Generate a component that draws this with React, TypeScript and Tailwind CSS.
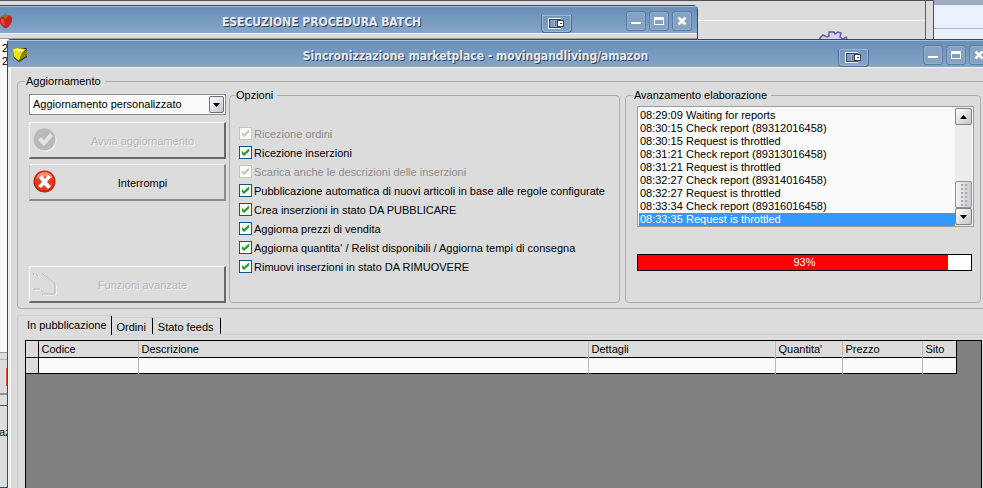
import React, { useState } from 'react';
import clsx from 'clsx';

const OPTIONS = [
  { id: 'orders', label: 'Ricezione ordini', disabled: true },
  { id: 'listings', label: 'Ricezione inserzioni', disabled: false },
  { id: 'descriptions', label: 'Scarica anche le descrizioni delle inserzioni', disabled: true },
  { id: 'autopublish', label: 'Pubblicazione automatica di nuovi articoli in base alle regole configurate', disabled: false },
  { id: 'create', label: 'Crea inserzioni in stato DA PUBBLICARE', disabled: false },
  { id: 'prices', label: 'Aggiorna prezzi di vendita', disabled: false },
  { id: 'quantity', label: "Aggiorna quantita' / Relist disponibili / Aggiorna tempi di consegna", disabled: false },
  { id: 'remove', label: 'Rimuovi inserzioni in stato DA RIMUOVERE', disabled: false },
];

const LOG = [
  { time: '08:29:09', text: 'Waiting for reports' },
  { time: '08:30:15', text: 'Check report (89312016458)' },
  { time: '08:30:15', text: 'Request is throttled' },
  { time: '08:31:21', text: 'Check report (89313016458)' },
  { time: '08:31:21', text: 'Request is throttled' },
  { time: '08:32:27', text: 'Check report (89314016458)' },
  { time: '08:32:27', text: 'Request is throttled' },
  { time: '08:33:34', text: 'Check report (89316016458)' },
  { time: '08:33:35', text: 'Request is throttled' },
];

const COLUMNS = [
  { label: 'Codice', width: 'w-[100px]' },
  { label: 'Descrizione', width: 'w-[450px]' },
  { label: 'Dettagli', width: 'w-[187px]' },
  { label: "Quantita'", width: 'w-[67px]' },
  { label: 'Prezzo', width: 'w-[80px]' },
  { label: 'Sito', width: 'w-[34px]' },
];

const TABS = ['In pubblicazione', 'Ordini', 'Stato feeds'];

const StrawberryIcon = () => (
  <svg width="17" height="17" viewBox="0 0 17 17" aria-hidden="true">
    <path d="M0 5 Q2 2 6 3 Q11 1 12 5 Q13 10 7 15 Q5 16 3 14 Q-2 9 0 5Z" fill="#c8241c" />
    <path d="M1 6 Q3 5 4 7 L5 13 Q0 10 1 6Z" fill="#e04a3c" />
    <path d="M1 3 L4 2 L5 0 L7 2 L10 2 L7 4 L5 6 L4 4Z" fill="#8a7a2c" />
  </svg>
);

const CubeIcon = () => (
  <svg width="16" height="16" viewBox="0 0 16 16" aria-hidden="true">
    <path d="M1 2 L5 1 H14 L15 3 V10 L7 15 L2 11Z" fill="#1c1c00" />
    <path d="M1 2 L5 1 L14 2 L10 6 L2 5Z" fill="#ffff20" />
    <path d="M1 3 L10 6 L7 14 L2 10Z" fill="#e8e800" />
    <path d="M10 6 L15 3 V9 L7 14Z" fill="#858500" />
    <path d="M6 3 H9 V4 H6Z" fill="#fff" />
  </svg>
);

const DockIcon = () => (
  <svg width="17" height="11" viewBox="0 0 17 11" aria-hidden="true" shapeRendering="crispEdges">
    <path d="M0 0h13v11H0z" fill="#f4f6f8" />
    <path d="M1 1h12v9H1z" fill="#3d4656" />
    <path d="M2 2h10v7H2z" fill="#7d9cc2" />
    <path d="M6 2h1v7H6z" fill="#a8b8cc" />
    <path d="M7 3h1v5H7z" fill="#4f6580" />
    <path d="M9 2h7v7H9z" fill="#3d4656" />
    <path d="M10 3h5v5h-5z" fill="#fff" />
    <path d="M12 5h2v1h-2z" fill="#3d4656" />
  </svg>
);

const GearIcon = () => (
  <svg width="32" height="32" viewBox="0 0 32 32" aria-hidden="true">
    <path
      d="M3 7 L6 4 L10 6 L12 5 L12 1 L17 1 L18 3 L21 1 L24 2 L23 6 L26 8 L29 6 L31 10 L28 15 L31 18 L27 25 L16 30 L5 24 L1 16Z"
      fill="#d5d3f0"
      stroke="#605f9c"
      strokeWidth="1.5"
    />
  </svg>
);

const CheckCircle = () => (
  <svg width="24" height="24" viewBox="0 0 24 24" aria-hidden="true">
    <circle cx="12.5" cy="12.5" r="11" fill="#f4f4f4" />
    <circle cx="11.5" cy="11.5" r="11" fill="#b9b9b9" />
    <path d="M5 12 L8 9 L11 12 L17 5 L20 8 L11 18Z" fill="#e4e4e4" />
  </svg>
);

const StopCircle = () => (
  <svg width="24" height="24" viewBox="0 0 24 24" aria-hidden="true">
    <circle cx="11.5" cy="11.5" r="11" fill="#c5240c" />
    <circle cx="11.5" cy="11" r="9.5" fill="#ee3818" />
    <path d="M3 9 Q5 2 11.5 2 Q18 2 20 9 Q12 4 3 9Z" fill="#ff8e70" />
    <path d="M6 8 L9 5 L12 9 L15 5 L18 7 L14 12 L18 16 L15 19 L11 15 L8 18 L5 16 L9 12Z" fill="#fff" />
  </svg>
);

const FoldersIcon = () => (
  <svg width="24" height="24" viewBox="0 0 24 24" fill="none" aria-hidden="true">
    <path d="M0.500 1V3M3 2L5 4M9 1L12 4M0.500 17H7M8 18L10 20M13 4L22 12V22H9" stroke="#fff" transform="translate(1 1)" />
    <path d="M0.500 1V3M3 2L5 4M9 1L12 4M0.500 17H7M8 18L10 20M13 4L22 12V22H9" stroke="#b4b4b4" />
  </svg>
);

const CAPTION_BUTTON =
  'flex size-5 items-center justify-center rounded-[3px] border border-[#5b7ea6] bg-[#85a2c3] shadow-[inset_0_0_0_1px_#92adcb]';

interface TitleBarProps {
  icon: React.ReactNode;
  title: string;
}

const TitleBar: React.FC<TitleBarProps> = ({ icon, title }) => (
  <header className="relative flex h-7 shrink-0 items-center gap-[3px] border-t border-b border-t-[#a9c0d9] border-b-[#f4f4f4] bg-linear-to-b from-[#688fb8] to-[#86a5c7] pt-0.5 pr-[5px] pl-1">
    {icon}
    <h1 className="flex-1 pt-0.5 text-center font-['DejaVu_Sans_Condensed','DejaVu_Sans',sans-serif] text-[12px] leading-4 font-bold whitespace-nowrap text-[#e6ebf2] [text-shadow:1px_1px_0_#34445a]">
      {title}
    </h1>
    <button aria-label="Sgancia" className="absolute right-[125px] bottom-0 flex h-[18px] w-[31px] items-center justify-center rounded-b-[4px] border border-t-0 border-[#4f6d90] shadow-[inset_0_0_0_1px_#9db6d0]">
      <DockIcon />
    </button>
    <button aria-label="Riduci" className={CAPTION_BUTTON}>
      <svg width="10" height="10" viewBox="0 0 10 10"><path d="M0 6h10v2H0z" fill="#fff" /></svg>
    </button>
    <button aria-label="Ingrandisci" className={CAPTION_BUTTON}>
      <svg width="10" height="10" viewBox="0 0 10 10"><path d="M0 1h10v8H0zM1 4v4h8V4z" fill="#fff" fillRule="evenodd" /></svg>
    </button>
    <button aria-label="Chiudi" className={CAPTION_BUTTON}>
      <svg width="10" height="10" viewBox="0 0 10 10"><path d="M1.500 1.500 L8.500 8.500 M8.500 1.500 L1.500 8.500" stroke="#fff" strokeWidth="2.6" /></svg>
    </button>
  </header>
);

interface ActionButtonProps {
  icon: React.ReactNode;
  label: string;
  disabled?: boolean;
}

const ActionButton: React.FC<ActionButtonProps> = ({ icon, label, disabled }) => (
  <button
    disabled={disabled}
    className={clsx(
      'flex h-[37px] shrink-0 items-center border-t border-r-2 border-b-2 border-l pl-[3px]',
      disabled
        ? 'border-t-white border-r-[#696969] border-b-[#696969] border-l-white text-[#b8b8b8] [text-shadow:1px_1px_0_#f2f2f2]'
        : 'border-t-[#f0f0f0] border-r-[#8a8a8a] border-b-[#8a8a8a] border-l-[#c8c8d0] text-black'
    )}
  >
    {icon}
    <span className="flex-1 pt-0.5 pl-1">{label}</span>
  </button>
);

interface GroupBoxProps {
  title: string;
  className?: string;
  children: React.ReactNode;
}

const GroupBox: React.FC<GroupBoxProps> = ({ title, className, children }) => (
  <fieldset className={clsx('min-w-0 rounded-[4px] border border-[#acacac]', className)}>
    <legend className="-ml-1 pr-1 pl-px leading-3">{title}</legend>
    {children}
  </fieldset>
);

const ARROW_BUTTON =
  'flex h-[17px] w-[17px] items-center justify-center rounded-[2px] border border-[#808088] bg-linear-to-br from-white to-[#c4c4ca]';

const App: React.FC = () => {
  const [activeTab, setActiveTab] = useState(TABS[0]);
  const [checked, setChecked] = useState<string[]>(OPTIONS.map((o) => o.id));
  const progress = 93;

  const toggle = (id: string) =>
    setChecked(checked.includes(id) ? checked.filter((c) => c !== id) : [...checked, id]);

  return (
    <div className="relative h-screen overflow-hidden bg-[#e9f1fc] font-['Liberation_Sans',sans-serif] text-[11px] leading-[13px] text-black">
      {/* Desktop strip behind the windows */}
      <div className="h-[5px] bg-[#9dabbf]"></div>
      <div className="h-6 border-b border-[#a9b8cb]"></div>

      {/* Parent application window */}
      <div className="absolute inset-y-0 right-[49px] left-0 border-t border-r border-[#50505a] bg-[#dcdcdc] pr-[7px]">
        <div className="h-full border-r border-[#60606a]">
          <div className="h-5 border-b border-white"></div>
        </div>
        <div className="absolute top-[30px] right-[84px]">
          <GearIcon />
        </div>
      </div>

      {/* Batch window */}
      <section className="absolute top-[5px] bottom-0 -left-[5px] flex w-[703px] flex-col rounded-t-[4px] border border-[#39485c] bg-[#dcdcdc]">
        <TitleBar icon={<StrawberryIcon />} title="ESECUZIONE PROCEDURA BATCH" />
        <div className="mt-1 flex h-[315px] flex-col border-t border-b border-[#a0a0a0] bg-[#fafafa] pt-[3px] pl-1.5">
          <span>2</span>
          <span>2</span>
        </div>
        <div className="mt-1.5 h-9 border-t border-b-2 border-[#b0b0b8] border-b-[#909090] pt-2 pl-2.5">
          <div className="h-[18px] w-5 bg-[#e2532f]"></div>
        </div>
        <div className="mt-2.5 border-t border-[#50505a] pt-5 pl-[3px]">az</div>
      </section>

      {/* Marketplace sync window */}
      <section className="absolute top-[39px] -right-3 bottom-0 left-[7px] flex flex-col rounded-tl-[4px] border border-b-0 border-[#39485c] bg-[#dcdcdc]">
        <TitleBar icon={<CubeIcon />} title="Sincronizzazione marketplace - movingandliving/amazon" />

        <main className="flex min-h-0 flex-1 flex-col border-l-3 border-[#f0f0f0] pt-[7px] pr-[5px] pl-1.5">
          <GroupBox title="Aggiornamento" className="pr-[7px] pb-[5px] pl-[11px]">
            <div className="flex pt-0.5">
              <div className="mr-[3px] flex w-[197px] shrink-0 flex-col pt-[5px]">
                <div className="relative mb-[7px] flex">
                  <select
                    aria-label="Tipo di aggiornamento"
                    className="h-[21px] w-full appearance-none border border-[#8c8c8c] bg-[#fafafa] pr-5 pl-[3px]"
                  >
                    <option>Aggiornamento personalizzato</option>
                  </select>
                  <span className="pointer-events-none absolute top-0.5 right-0.5 flex h-[17px] w-[15px] items-center justify-center rounded-[2px] border border-[#70707c] bg-linear-to-br from-white to-[#c4c4ca]">
                    <svg width="7" height="4" viewBox="0 0 7 4"><path d="M0 0h7L3.500 4z" /></svg>
                  </span>
                </div>
                <ActionButton icon={<CheckCircle />} label="Avvia aggiornamento" disabled />
                <div className="mt-[5px] flex flex-1 flex-col justify-between">
                  <ActionButton icon={<StopCircle />} label="Interrompi" />
                  <ActionButton icon={<FoldersIcon />} label="Funzioni avanzate" disabled />
                </div>
              </div>

              <div className="grid flex-1 grid-cols-[392fr_357fr] gap-[5px]">
                <GroupBox title="Opzioni" className="h-[214px] pt-[23px] pl-[9px]">
                  {OPTIONS.map((option) => (
                    <label
                      key={option.id}
                      className={clsx(
                        'flex h-[19px] items-center gap-0.5 whitespace-nowrap',
                        option.disabled && 'text-[#8c8c8c]'
                      )}
                    >
                      <span className="relative flex">
                        <input
                          type="checkbox"
                          checked={checked.includes(option.id)}
                          disabled={option.disabled}
                          onChange={() => toggle(option.id)}
                          className="peer size-[13px] appearance-none border border-[#1c5180] bg-[#fafafa] disabled:border-[#c6c6ba]"
                        />
                        <svg
                          width="13"
                          height="13"
                          viewBox="0 0 13 13"
                          className={clsx(
                            'pointer-events-none invisible absolute inset-0 peer-checked:visible',
                            option.disabled ? 'fill-[#c6c6ba]' : 'fill-[#21a121]'
                          )}
                        >
                          <path d="M3 5 L5 7 L10 2.500 V5.500 L5 10 L3 8Z" />
                        </svg>
                      </span>
                      <span className="pt-px">{option.label}</span>
                    </label>
                  ))}
                </GroupBox>

                <GroupBox title="Avanzamento elaborazione" className="h-[214px] pt-[5px] pr-1.5 pl-[11px]">
                  <div className="flex h-[121px] border border-[#9c9c9c] bg-[#fafafa] pr-px">
                    <ul role="listbox" aria-label="Log" className="flex-1 pt-0.5 pl-px">
                      {LOG.map((entry, idx) => (
                        <li
                          key={idx}
                          role="option"
                          aria-selected={idx === LOG.length - 1}
                          className="flex h-[13px] pl-px whitespace-nowrap aria-selected:bg-[#3399ff] aria-selected:text-white"
                        >
                          <span className="w-[46px] shrink-0">{entry.time}</span>
                          <span>{entry.text}</span>
                        </li>
                      ))}
                    </ul>
                    <div className="flex w-[17px] flex-col bg-[#ececec] py-px">
                      <button aria-label="Su" className={ARROW_BUTTON}>
                        <svg width="7" height="4" viewBox="0 0 7 4"><path d="M0 4h7L3.500 0z" /></svg>
                      </button>
                      <div className="flex flex-1 flex-col justify-end">
                        <div className="flex h-[27px] items-center justify-center rounded-[2px] border border-[#909098] bg-linear-to-r from-[#f4f4f4] to-[#cacace]">
                          <svg width="6" height="22" viewBox="0 0 6 22" fill="#a8a8ac">
                            {[0, 4, 8, 12, 16, 20].map((y) => (
                              <g key={y}>
                                <rect x="0" y={y} width="2" height="2" />
                                <rect x="4" y={y} width="2" height="2" />
                              </g>
                            ))}
                          </svg>
                        </div>
                      </div>
                      <button aria-label="Giù" className={ARROW_BUTTON}>
                        <svg width="7" height="4" viewBox="0 0 7 4"><path d="M0 0h7L3.500 4z" /></svg>
                      </button>
                    </div>
                  </div>

                  <div
                    role="progressbar"
                    aria-label="Avanzamento"
                    aria-valuenow={progress}
                    className="relative mt-[27px] mr-0.5 h-[17px] border border-black bg-white"
                  >
                    <div className="h-full bg-[#ff0000]" style={{ width: `${progress}%` }}></div>
                    <span className="absolute inset-0 pt-px text-center text-white">{progress}%</span>
                  </div>
                </GroupBox>
              </div>
            </div>
          </GroupBox>

          <div role="tablist" className="mt-1.5 flex h-5 items-end border-b border-[#cfcfda]">
            {TABS.map((tab) => (
              <button
                key={tab}
                role="tab"
                aria-selected={tab === activeTab}
                onClick={() => setActiveTab(tab)}
                className={clsx(
                  'rounded-t-[2px] border-t border-r border-[#cfcfda] border-r-black',
                  tab === activeTab
                    ? '-mb-px h-5 border-l bg-[#dcdcdc] pr-1 pl-[9px]'
                    : 'h-[17px] pr-1.5 pl-[5px] pt-0.5'
                )}
              >
                {tab}
              </button>
            ))}
          </div>

          <div role="tabpanel" className="flex min-h-0 flex-1 border-l border-[#cfcfda] pt-[5px] pr-[7px] pl-[7px]">
            <div className="flex-1 border border-b-0 border-black bg-[#808080]">
              <table className="w-[930px] table-fixed border-collapse text-left">
                <thead>
                  <tr className="h-4 border-b border-black bg-[#dcdcdc]">
                    <th className="w-3 border-r border-black p-0"></th>
                    {COLUMNS.map((col) => (
                      <th
                        key={col.label}
                        className={clsx(
                          'border-r border-[#b8b8b8] p-0 pt-px pl-[3px] font-normal last:border-black',
                          col.width
                        )}
                      >
                        {col.label}
                      </th>
                    ))}
                  </tr>
                </thead>
                <tbody>
                  <tr className="h-4 border-b border-black bg-[#fafafa]">
                    <td className="border-r border-black bg-[#dcdcdc] p-0"></td>
                    {COLUMNS.map((col) => (
                      <td key={col.label} className="border-r border-[#b8b8b8] p-0 last:border-black"></td>
                    ))}
                  </tr>
                </tbody>
              </table>
            </div>
          </div>
        </main>
      </section>
    </div>
  );
};

export default App;
